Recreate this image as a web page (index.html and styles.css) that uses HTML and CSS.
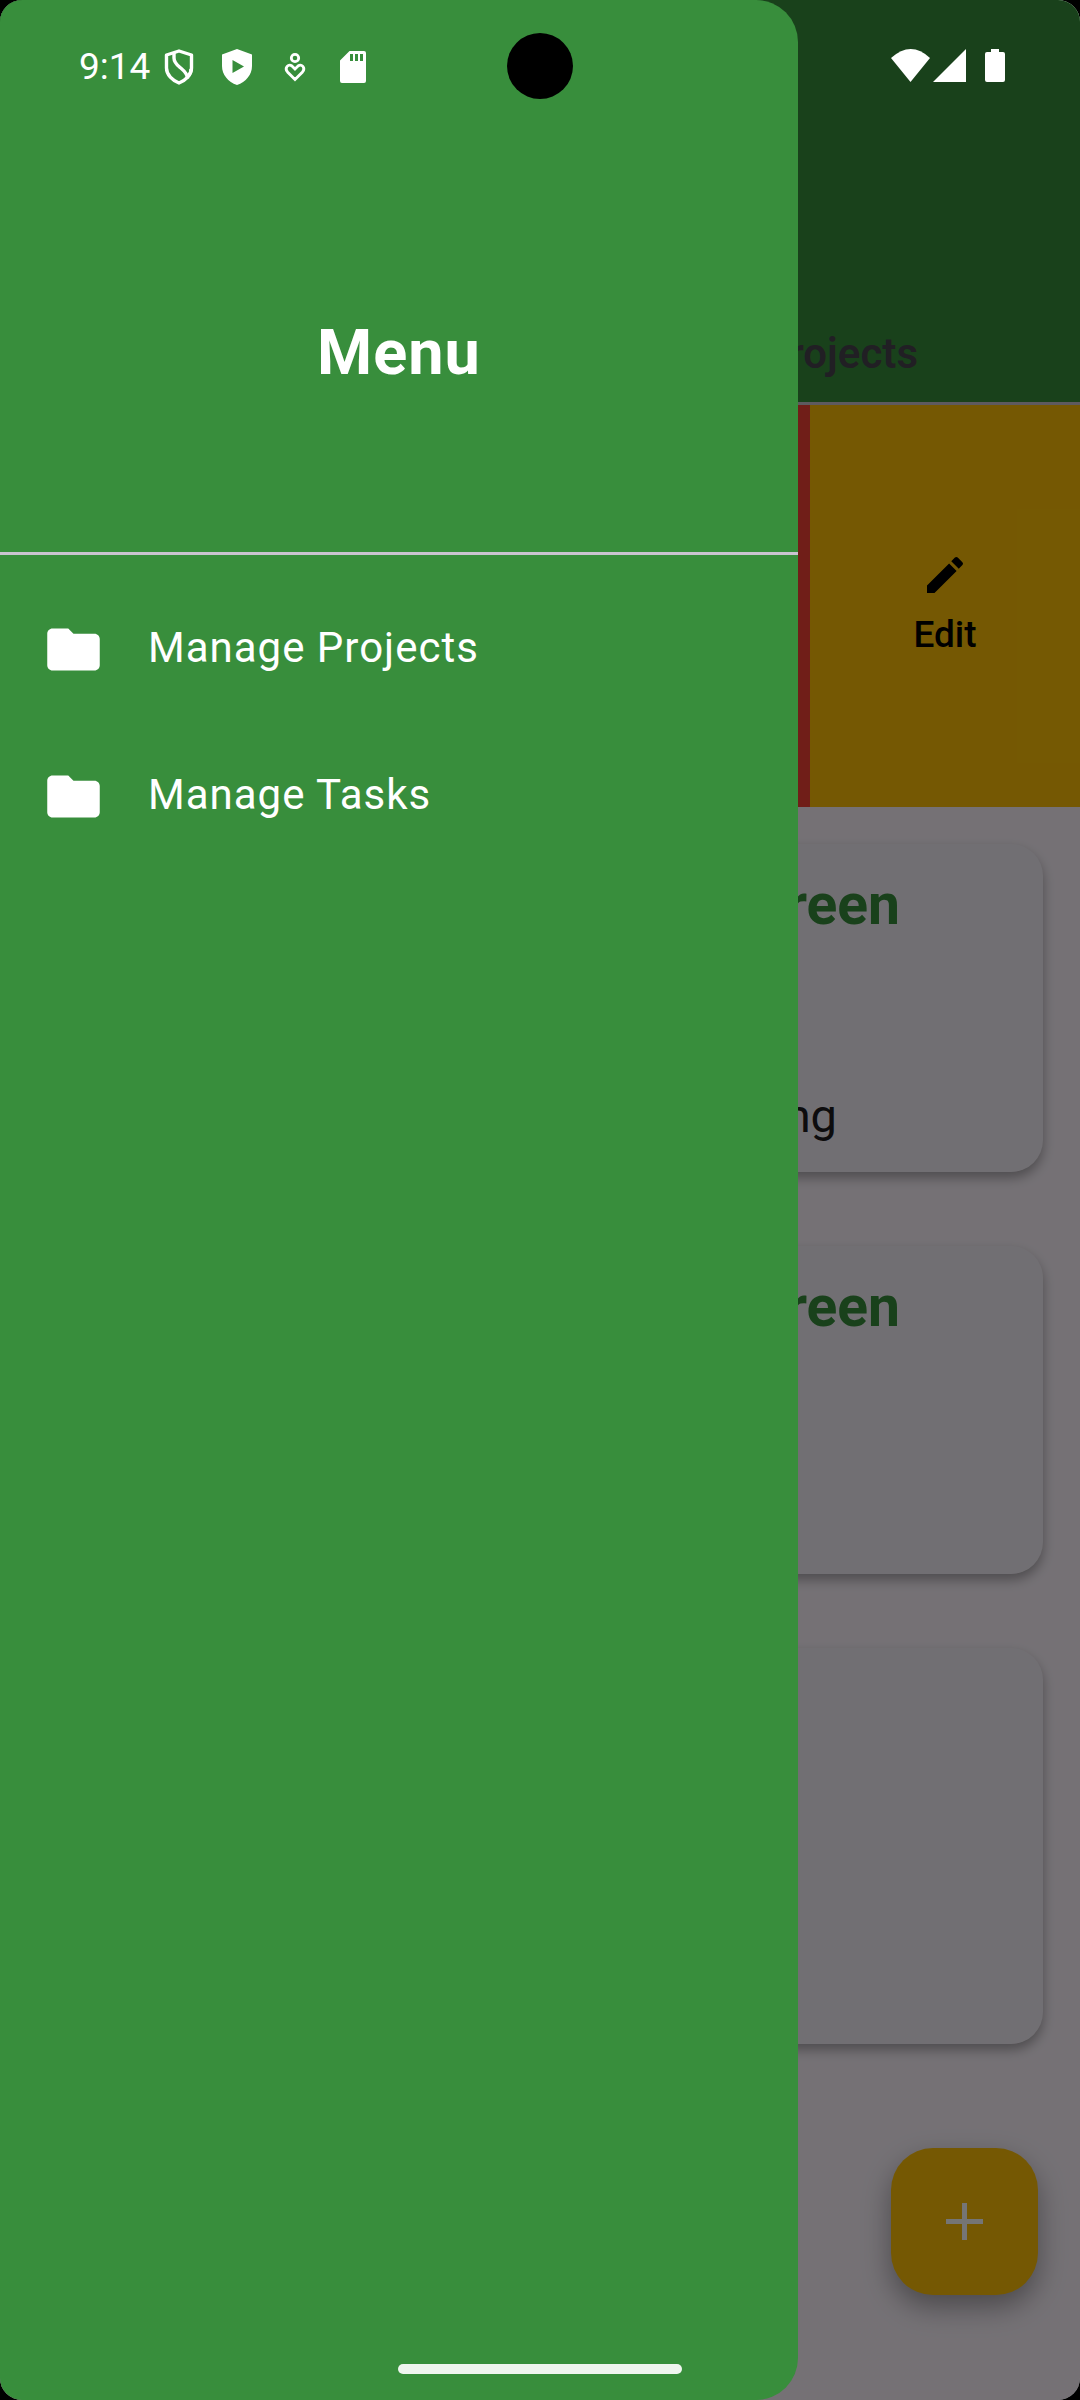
FILE: index.html
```html
<!DOCTYPE html>
<html lang="en">
<head>
<meta charset="utf-8">
<meta name="viewport" content="width=device-width, initial-scale=1">
<title>Projects</title>
<link rel="stylesheet" href="styles.css">
</head>
<body>
<div class="screen">
  <main class="app">
    <header class="app-bar"><h1 class="app-title">Projects</h1></header>
    <section class="swipe-row">
      <div class="swipe-rest"></div>
      <button class="swipe-action delete" type="button" aria-label="Delete"></button>
      <button class="swipe-action edit" type="button">
        <svg class="action-icon" viewBox="0 0 24 24" aria-hidden="true"><path d="M3 17.25V21h3.75L17.81 9.94l-3.75-3.75L3 17.25zM20.71 7.04a1 1 0 0 0 0-1.41l-2.34-2.34a1 1 0 0 0-1.41 0l-1.83 1.83 3.75 3.75 1.83-1.83z"/></svg>
        <span>Edit</span>
      </button>
    </section>
    <section class="cards">
      <article class="card">
        <h2 class="card-title">Green</h2>
        <p class="card-text">ng</p>
      </article>
      <article class="card">
        <h2 class="card-title">Green</h2>
      </article>
      <article class="card tall"></article>
    </section>
    <button class="fab" type="button" aria-label="Add project">
      <svg class="fab-icon" viewBox="0 0 63 63" aria-hidden="true"><path d="M29 13h5v16h16v5H34v16h-5V34H13v-5h16z"/></svg>
    </button>
  </main>

  <div class="scrim"></div>

  <aside class="drawer">
    <div class="drawer-header"><h2 class="drawer-title">Menu</h2></div>
    <nav class="drawer-nav">
      <a class="drawer-link" href="#projects">
        <svg class="drawer-icon" viewBox="0 0 24 24" aria-hidden="true"><path d="M10 4H4c-1.1 0-2 .9-2 2v12c0 1.1.9 2 2 2h16c1.1 0 2-.9 2-2V8c0-1.1-.9-2-2-2h-8l-2-2z"/></svg>
        <span class="drawer-label">Manage Projects</span>
      </a>
      <a class="drawer-link" href="#tasks">
        <svg class="drawer-icon" viewBox="0 0 24 24" aria-hidden="true"><path d="M10 4H4c-1.1 0-2 .9-2 2v12c0 1.1.9 2 2 2h16c1.1 0 2-.9 2-2V8c0-1.1-.9-2-2-2h-8l-2-2z"/></svg>
        <span class="drawer-label">Manage Tasks</span>
      </a>
    </nav>
  </aside>

  <div class="status-bar">
    <div class="status-left">
      <span class="clock">9:14</span>
      <div class="notices">
        <svg width="30" height="36" viewBox="0 0 30 36" fill="none" stroke="#fff" stroke-width="3.4" stroke-linejoin="round"><path d="M15 2 27.500 6v13c0 7-6 12.500-12.500 15C8.500 31.500 2.500 26 2.500 19V6z"/><path d="M10 4v5c0 4 2 6 5.500 9s8 6 8 11.500M23 28c2-1.500 4-4.500 4-8"/></svg>
        <svg width="30" height="36" viewBox="0 0 30 36" fill="#fff"><path fill-rule="evenodd" d="M15 0 30 5.500V17c0 8.500-6 16-15 19C6 33 0 25.500 0 17V5.500zM10.500 11v13L22 17.500z"/></svg>
        <svg width="30" height="36" viewBox="0 0 30 36" fill="none" stroke="#fff" stroke-width="2.8"><circle cx="15" cy="9" r="3.700"/><path d="M15 30.500 7.500 23c-3.500-4.500 1-8.500 4.500-6l3 3 3-3c3.500-2.500 8 1.500 4.500 6z"/></svg>
        <svg width="30" height="36" viewBox="0 0 30 36" fill="#fff"><path fill-rule="evenodd" d="M11.500 2H26q2 0 2 2v28q0 2-2 2H4q-2 0-2-2V11.500zM12 5v7h3V5zm5 0v7h3V5zm5 0v7h3V5z"/></svg>
      </div>
    </div>
    <div class="camera"></div>
    <svg class="system-icons" width="115" height="34" viewBox="0 0 115 34" fill="#fff" aria-hidden="true"><path d="M0 9Q20-9 39 9L19.500 33z"/><path d="M42 33 75 0v33z"/><path d="M100 0h8v3h4q2 0 2 2v26q0 2-2 2H96q-2 0-2-2V5q0-2 2-2h4z"/></svg>
  </div>
  <div class="home-bar"></div>
</div>
</body>
</html>
```
FILE: styles.css
```css
* { box-sizing: border-box; }

body {
  margin: 0;
  background: #000;
  font-family: Roboto, "Liberation Sans", sans-serif;
}

h1, h2, p { margin: 0; }

button {
  border: 0;
  padding: 0;
  font: inherit;
}

.screen {
  position: relative;
  min-height: 100vh;
  overflow: hidden;
  border-radius: 22px;
  background: #fef7ff;
}

.app-bar {
  display: flex;
  justify-content: flex-end;
  padding: 329px 162px 23px;
  border-bottom: 3px solid #cac4d0;
  background: #388e3c;
}

.app-title {
  font-size: 42px;
  line-height: 50px;
  font-weight: 600;
  color: #49454f;
}

.swipe-row {
  display: flex;
  height: 402px;
}

.swipe-rest { flex: 2; }

.swipe-action {
  flex: 1;
  display: flex;
  flex-direction: column;
  align-items: center;
  justify-content: center;
  gap: 10px;
  font-size: 37px;
  line-height: 52px;
  font-weight: 500;
  color: #000;
}

.delete { background: #f44336; }
.edit { background: #ffc107; }

.action-icon {
  width: 48px;
  height: 48px;
}

.cards {
  display: flex;
  flex-direction: column;
  gap: 74px;
  padding: 37px;
}

.card {
  display: flex;
  flex-direction: column;
  align-items: flex-end;
  justify-content: space-between;
  min-height: 328px;
  padding: 28px 143px 28px 28px;
  border-radius: 32px;
  background: #f7f2fa;
  box-shadow: 0 6px 12px rgba(0, 0, 0, .32);
}

.tall { min-height: 396px; }

.card-title {
  font-size: 57px;
  line-height: 66px;
  font-weight: 700;
  color: #388e3c;
}

.card-text {
  padding-right: 63px;
  font-size: 47px;
  line-height: 56px;
  color: #1d1b20;
}

.fab {
  position: absolute;
  right: 42px;
  bottom: 105px;
  display: grid;
  place-items: center;
  width: 147px;
  height: 147px;
  border-radius: 42px;
  background: #ffc107;
  box-shadow: 0 12px 28px rgba(0, 0, 0, .35);
}

.fab-icon {
  width: 63px;
  height: 63px;
  fill: #fff;
}

.scrim {
  position: absolute;
  inset: 0;
  background: rgba(0, 0, 0, .54);
}

.drawer {
  position: absolute;
  top: 0;
  bottom: 0;
  left: 0;
  width: 80%;
  max-width: 798px;
  border-radius: 0 42px 42px 0;
  background: #388e3c;
  color: #fff;
}

.drawer-header {
  padding: 316px 42px 162px;
  border-bottom: 3px solid #cac4d0;
  text-align: center;
}

.drawer-title {
  font-size: 63px;
  line-height: 74px;
  font-weight: 700;
  letter-spacing: 1px;
}

.drawer-nav { padding-top: 21px; }

.drawer-link {
  display: flex;
  align-items: center;
  gap: 43px;
  height: 147px;
  padding: 0 42px;
  font-size: 42px;
  line-height: 50px;
  letter-spacing: 1px;
  color: #fff;
  text-decoration: none;
}

.drawer-label { padding-bottom: 4px; }

.drawer-icon {
  width: 63px;
  height: 63px;
  fill: #fff;
}

.status-bar {
  position: absolute;
  top: 0;
  left: 0;
  right: 0;
  display: grid;
  grid-template-columns: 1fr 66px 1fr;
  align-items: center;
  height: 132px;
  padding: 0 74px;
  color: #fff;
}

.status-left {
  display: flex;
  align-items: center;
  gap: 14px;
  padding: 2px 0 0 5px;
}

.clock {
  font-size: 37px;
  line-height: 44px;
}

.notices {
  display: flex;
  gap: 28px;
}

.camera {
  height: 66px;
  border-radius: 50%;
  background: #000;
}

.system-icons { justify-self: end; }

.home-bar {
  position: absolute;
  left: 0;
  right: 0;
  bottom: 26px;
  width: 284px;
  height: 10px;
  margin: 0 auto;
  border-radius: 5px;
  background: #eff5ef;
}
```
